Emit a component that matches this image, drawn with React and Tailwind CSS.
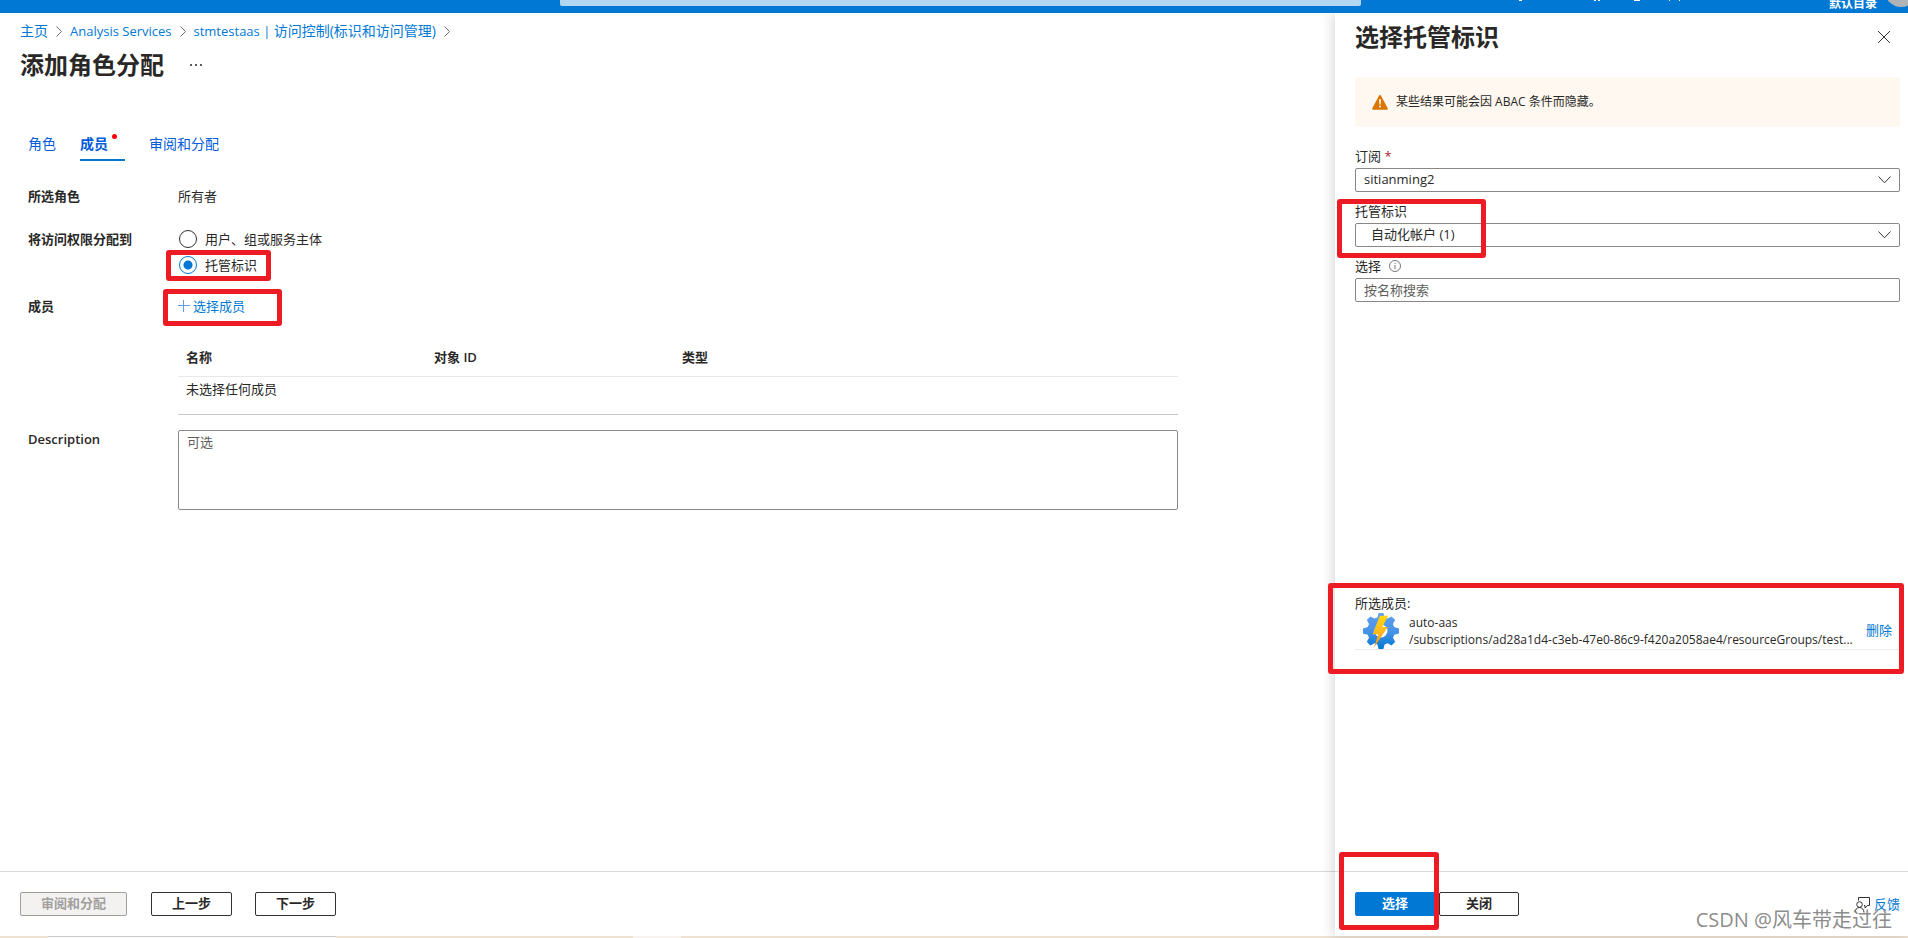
import React, { useState } from 'react';

const Mark = ({ className }) => (
  <span
    aria-hidden="true"
    className={`pointer-events-none absolute z-10 rounded-[3px] border-[5px] border-[#ed1c24] ${className}`}
  />
);

const ChevronRight = () => (
  <svg width="6" height="11" viewBox="0 0 6 11" fill="none" stroke="#707070" aria-hidden="true">
    <path d="M0.5 0.5L5.5 5.5L0.5 10.5" />
  </svg>
);

const ChevronDown = () => (
  <svg
    width="13"
    height="8"
    viewBox="0 0 13 8"
    fill="none"
    stroke="#323130"
    className="pointer-events-none absolute right-[9px] top-2"
    aria-hidden="true"
  >
    <path d="M0.5 0.5L6.5 6.8L12.5 0.5" />
  </svg>
);

const WarningIcon = () => (
  <svg width="16" height="15" viewBox="0 0 16 15" aria-hidden="true">
    <path d="M7.1 0.6a1 1 0 0 1 1.8 0l6.8 12.6a1 1 0 0 1-.9 1.5H1.2a1 1 0 0 1-.9-1.5z" fill="#db7500" />
    <path d="M7.1 4.2h1.8l-.3 5.2H7.4z" fill="#fff" />
    <circle cx="8" cy="11.6" r="1" fill="#fff" />
  </svg>
);

const InfoIcon = () => (
  <svg width="12" height="12" viewBox="0 0 12 12" fill="none" stroke="#797775" aria-hidden="true">
    <circle cx="6" cy="6" r="5.5" />
    <path d="M6 5v4M6 3v1" />
  </svg>
);

const AutomationIcon = () => (
  <svg width="36" height="36" viewBox="0 0 36 36" className="shrink-0" aria-hidden="true">
    <defs>
      <linearGradient id="gear" x1="18" y1="0" x2="18" y2="36" gradientUnits="userSpaceOnUse">
        <stop offset="0" stopColor="#5ea0ef" />
        <stop offset="0.5" stopColor="#4a94e8" />
        <stop offset="1" stopColor="#0078d4" />
      </linearGradient>
      <linearGradient id="bolt" x1="18" y1="3" x2="18" y2="35" gradientUnits="userSpaceOnUse">
        <stop offset="0" stopColor="#ffd70f" />
        <stop offset="0.5" stopColor="#ffb91f" />
        <stop offset="1" stopColor="#ff8a1a" />
      </linearGradient>
    </defs>
    <path
      fill="url(#gear)"
      fillRule="evenodd"
      d="M15.6 0h4.8l1.2 4.4 3 1.2 4-2.2 3.6 3.6-2.3 4 1.3 3 4.8 1.4v5l-4.8 1.3-1.2 3 2.2 4-3.6 3.7-4-2.2-3 1.2-1.2 4.6h-4.8l-1.2-4.6-3-1.2-4 2.2-3.6-3.6 2.2-4.1-1.2-3L0 20.4v-5L4.8 14 6 11 3.8 7l3.6-3.6 4 2.2 3-1.2zM18 11.5a6.5 6.5 0 1 0 0 13 6.5 6.5 0 0 0 0-13z"
    />
    <path fill="url(#bolt)" d="M16.8 2.8h8.4L19.4 14h5.4L10.8 34.8l4.6-13.6H9.6z" />
  </svg>
);

const FeedbackIcon = () => (
  <svg width="16" height="16" viewBox="0 0 16 16" fill="none" stroke="#323130" aria-hidden="true">
    <path d="M4.5 3.5v-3h11v8h-2.2l-2.3 2.6V8.5h-1" />
    <circle cx="5.5" cy="7.5" r="2.8" />
    <path d="M1 15.5c0-3 2-5 4.5-5s4.5 2 4.5 5" />
  </svg>
);

const baseButton = 'flex h-6 items-center justify-center rounded-[2px] border font-semibold';

const TopBar = () => (
  <header className="relative z-20 flex h-[13px] items-start overflow-hidden bg-[#0078d4]">
    <div className="w-[560px] shrink" />
    <input
      aria-label="搜索资源"
      className="h-[6px] w-[42%] shrink-0 rounded-b-[2px] bg-[#b3d7f2] outline-none"
    />
    <div className="flex-1" />
    <svg width="166" height="1" viewBox="0 0 166 1" fill="#fff" className="mr-[144px] shrink-0" aria-hidden="true">
      <path d="M0 0h3v1h-3zM75 0h2v1h-2zM79 0h2v1h-2zM115 0h6v1h-6zM150 0h1v1h-1zM160 0h1v1h-1z" />
    </svg>
    <div className="-mt-1 mr-2 h-4 shrink-0 text-[12px] leading-4 font-bold text-white">默认目录</div>
    <div className="-mt-[25px] -mr-[9px] h-8 w-8 shrink-0 rounded-full bg-[#b1b4b6]" />
  </header>
);

const Breadcrumb = () => (
  <nav className="flex h-5 items-center gap-2 text-[14px] leading-5 text-[#0078d4]">
    <a href="#home">主页</a>
    <ChevronRight />
    <a href="#services" className="text-[13px]">Analysis Services</a>
    <ChevronRight />
    <a href="#iam"><span className="text-[13px]">stmtestaas | </span>访问控制(标识和访问管理)</a>
    <ChevronRight />
  </nav>
);

const Tabs = () => (
  <div role="tablist" className="mt-12 ml-2 flex h-8 gap-6 text-[14px] text-[#015cda]">
    <button type="button" role="tab" className="h-8 border-b-2 border-transparent pb-[2px]">角色</button>
    <button
      type="button"
      role="tab"
      aria-selected="true"
      className="relative h-8 w-[45px] border-b-2 border-[#0078d4] pb-[2px] text-left font-semibold"
    >
      成员
      <span className="absolute top-[5px] right-2 h-[5px] w-[5px] rounded-full bg-[#f00]" />
    </button>
    <button type="button" role="tab" className="h-8 border-b-2 border-transparent pb-[2px]">审阅和分配</button>
  </div>
);

const Radio = ({ label, checked, onChange }) => (
  <label className="flex h-[26px] items-center gap-2 pl-px">
    <input
      type="radio"
      name="assignee"
      checked={checked}
      onChange={onChange}
      className="h-[18px] w-[18px] appearance-none rounded-full border border-[#323130] bg-white checked:border-[#0078d4] checked:bg-[radial-gradient(circle,#0078d4_4px,transparent_5px)]"
    />
    {label}
  </label>
);

const RoleForm = () => {
  const [assignee, setAssignee] = useState('managed');

  return (
    <div className="mt-[25px] ml-2 grid max-w-[1150px] grid-cols-[150px_1fr] leading-5">
      <div className="font-semibold">所选角色</div>
      <div>所有者</div>

      <div className="mt-5 leading-[26px] font-semibold">将访问权限分配到</div>
      <div className="mt-5 flex flex-col items-start">
        <Radio label="用户、组或服务主体" checked={assignee === 'user'} onChange={() => setAssignee('user')} />
        <div className="relative">
          <Radio label="托管标识" checked={assignee === 'managed'} onChange={() => setAssignee('managed')} />
          <Mark className="-top-[2px] -right-[14px] -bottom-[3px] -left-3" />
        </div>
      </div>

      <div className="mt-[18px] font-semibold">成员</div>
      <div className="mt-[18px] flex">
        <div className="relative">
          <button type="button" className="flex h-5 items-center gap-[3px] text-[#0078d4]">
            <svg width="12" height="12" viewBox="0 0 12 12" stroke="#5f9de6" aria-hidden="true">
              <path d="M0 5.5h12M5.5 0v12" />
            </svg>
            选择成员
          </button>
          <Mark className="-top-[7px] -right-[37px] -bottom-[10px] -left-[15px]" />
        </div>
      </div>

      <table className="col-start-2 mt-[23px] w-full table-fixed border-b border-[#c8c6c4] text-left">
        <thead>
          <tr className="h-[37px] border-b border-[#e8e8e8]">
            <th className="w-[248px] pl-2 font-semibold">名称</th>
            <th className="w-[248px] pl-2 font-semibold">对象 ID</th>
            <th className="pl-2 font-semibold">类型</th>
          </tr>
        </thead>
        <tbody>
          <tr>
            <td colSpan={3} className="pt-[2px] pb-[15px] pl-2">未选择任何成员</td>
          </tr>
        </tbody>
      </table>

      <label htmlFor="description" className="mt-[14px] font-semibold">Description</label>
      <textarea
        id="description"
        placeholder="可选"
        className="mt-[15px] block h-20 w-full resize-none rounded-[2px] border border-[#8a8886] px-2 py-px placeholder:text-[#605e5c]"
      />
    </div>
  );
};

const SelectField = ({ id, label, required, value, indent }) => (
  <div>
    <label htmlFor={id} className="block h-5 leading-5">
      {label}
      {required ? <span className="text-[#a4262c]"> *</span> : null}
    </label>
    <div className="relative mt-[2px]">
      <select
        id={id}
        defaultValue={value}
        className={`block h-6 w-full appearance-none rounded-[2px] border border-[#8a8886] bg-white ${indent ? 'pl-[15px]' : 'pl-2'}`}
      >
        <option>{value}</option>
      </select>
      <ChevronDown />
    </div>
  </div>
);

const IdentityPanel = () => (
  <aside className="relative z-10 flex w-[573px] shrink-0 flex-col bg-white shadow-[-2px_0_12px_rgba(0,0,0,0.16)]">
    <div className="flex flex-1 flex-col pt-2 pr-2 pl-5">
      <div className="flex h-8 items-center justify-between">
        <h2 className="text-[24px] leading-8 font-semibold">选择托管标识</h2>
        <button type="button" aria-label="关闭面板" className="mr-[10px]">
          <svg width="12" height="12" viewBox="0 0 12 12" stroke="#323130" aria-hidden="true">
            <path d="M0 0L12 12M12 0L0 12" />
          </svg>
        </button>
      </div>

      <div className="mt-6 flex h-[50px] items-center gap-2 rounded-[2px] bg-[#fff8f0] pl-[17px] text-[12px]">
        <WarningIcon />
        <span>某些结果可能会因 ABAC 条件而隐藏。</span>
      </div>

      <div className="mt-[19px] flex flex-col gap-[9px]">
        <SelectField id="subscription" label="订阅" value="sitianming2" required />
        <div className="relative">
          <SelectField id="identity" label="托管标识" value="自动化帐户 (1)" indent />
          <Mark className="-top-[2px] -bottom-[11px] -left-[18px] w-[149px]" />
        </div>
        <div>
          <label htmlFor="search" className="flex h-5 items-center gap-2 leading-5">
            选择
            <InfoIcon />
          </label>
          <input
            id="search"
            placeholder="按名称搜索"
            className="mt-[2px] block h-6 w-full rounded-[2px] border border-[#8a8886] px-2 placeholder:text-[#605e5c]"
          />
        </div>
      </div>

      <div className="flex-1" />

      <div className="min-h-[278px]">
        <div className="relative h-[58px]">
          <div className="h-5 leading-5">所选成员:</div>
          <div className="flex items-center border-b border-[#edebe9] pr-2 pl-2">
            <AutomationIcon />
            <div className="ml-[10px] min-w-0 flex-1 text-[12px] leading-[17px]">
              <div>auto-aas</div>
              <div className="truncate">
                /subscriptions/ad28a1d4-c3eb-47e0-86c9-f420a2058ae4/resourceGroups/test...
              </div>
            </div>
            <a href="#remove" className="shrink-0 text-[#0078d4]">删除</a>
          </div>
          <Mark className="-top-[10px] -right-1 -bottom-[23px] -left-[27px]" />
        </div>
      </div>
    </div>

    <footer className="relative flex h-[65px] items-start border-t border-[#d9d9d9] pt-5 pr-2 pl-5">
      <div className="relative">
        <button type="button" className={`${baseButton} w-20 border-[#0078d4] bg-[#0078d4] text-white`}>选择</button>
        <Mark className="-top-10 -right-1 -bottom-[14px] -left-4" />
      </div>
      <button type="button" className={`${baseButton} ml-1 w-20 border-[#323130]`}>关闭</button>
      <a href="#feedback" className="ml-auto flex h-[26px] items-center gap-1 text-[#0078d4]">
        <FeedbackIcon />
        反馈
      </a>
      <div className="pointer-events-none absolute right-4 bottom-1 text-[20px] leading-6 text-[#7d7d7d]/90">
        CSDN @风车带走过往
      </div>
    </footer>
  </aside>
);

export default function App() {
  return (
    <div className="flex min-h-screen flex-col bg-white font-['Open_Sans','Noto_Sans_CJK_SC',sans-serif] text-[13px] text-[#292827]">
      <TopBar />
      <div className="flex flex-1">
        <main className="flex min-w-0 flex-1 flex-col">
          <div className="flex-1 pt-2 pr-5 pl-5">
            <Breadcrumb />
            <div className="mt-2 flex h-8 items-center gap-[26px]">
              <h1 className="text-[24px] leading-8 font-semibold">添加角色分配</h1>
              <button type="button" aria-label="更多">
                <svg width="12" height="2" viewBox="0 0 12 2" fill="#605e5c" aria-hidden="true">
                  <path d="M0 0h2v2H0zM5 0h2v2H5zM10 0h2v2h-2z" />
                </svg>
              </button>
            </div>
            <Tabs />
            <RoleForm />
          </div>
          <footer className="flex h-[65px] items-start border-t border-[#d9d9d9] pt-5 pl-5">
            <button type="button" disabled className={`${baseButton} w-[107px] border-[#a19f9d] bg-[#f3f2f1] text-[#a19f9d]`}>
              审阅和分配
            </button>
            <button type="button" className={`${baseButton} ml-6 w-[81px] border-[#323130]`}>上一步</button>
            <button type="button" className={`${baseButton} ml-[23px] w-[81px] border-[#323130]`}>下一步</button>
          </footer>
        </main>
        <IdentityPanel />
      </div>
      <div className="flex h-[2px] bg-[#eee2d3]">
        <div className="ml-12 w-72 border-t border-[#c8c8c8] bg-white" />
        <div className="ml-[297px] w-12 bg-[#f8f3ee]" />
      </div>
    </div>
  );
}
